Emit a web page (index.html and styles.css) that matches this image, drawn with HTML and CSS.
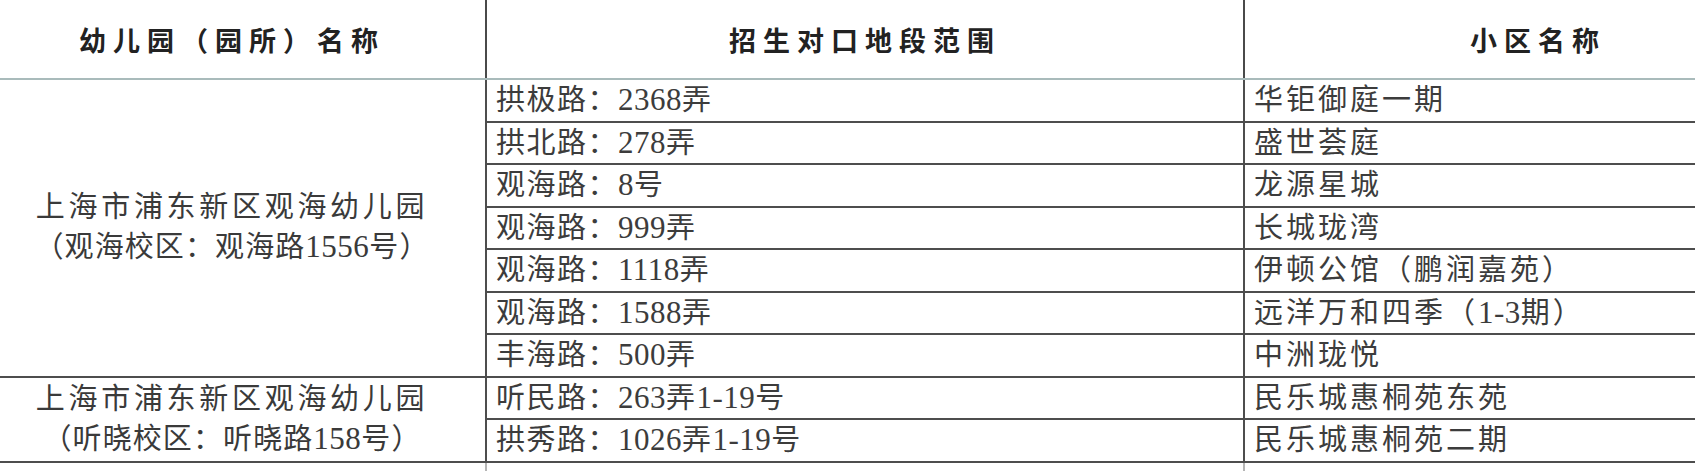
FILE: index.html
```html
<!DOCTYPE html>
<html lang="zh-CN">
<head>
<meta charset="utf-8">
<title>招生对口地段</title>
<link rel="stylesheet" href="styles.css">
</head>
<body>
<div class="page">
<table class="sheet">
<colgroup><col class="c1"><col class="c2"><col class="c3"></colgroup>
<thead>
<tr>
<th class="hd">幼儿园（园所）名称</th>
<th class="hd">招生对口地段范围</th>
<th class="hd">小区名称</th>
</tr>
</thead>
<tbody>
<tr>
<td class="school" rowspan="7"><div class="l1">上海市浦东新区观海幼儿园</div><div class="l2">（观海校区：观海路<span class="num">1556</span>号）</div></td>
<td class="road">拱极路：<span class="num">2368</span>弄</td>
<td class="estate">华钜御庭一期</td>
</tr>
<tr><td class="road">拱北路：<span class="num">278</span>弄</td><td class="estate">盛世荟庭</td></tr>
<tr><td class="road">观海路：<span class="num">8</span>号</td><td class="estate">龙源星城</td></tr>
<tr><td class="road">观海路：<span class="num">999</span>弄</td><td class="estate">长城珑湾</td></tr>
<tr><td class="road">观海路：<span class="num">1118</span>弄</td><td class="estate">伊顿公馆（鹏润嘉苑）</td></tr>
<tr><td class="road">观海路：<span class="num">1588</span>弄</td><td class="estate">远洋万和四季（<span class="num">1-3</span>期）</td></tr>
<tr><td class="road">丰海路：<span class="num">500</span>弄</td><td class="estate">中洲珑悦</td></tr>
<tr>
<td class="school" rowspan="2"><div class="l1">上海市浦东新区观海幼儿园</div><div class="l2">（听晓校区：听晓路<span class="num">158</span>号）</div></td>
<td class="road">听民路：<span class="num">263</span>弄<span class="num">1-19</span>号</td>
<td class="estate">民乐城惠桐苑东苑</td>
</tr>
<tr><td class="road">拱秀路：<span class="num">1026</span>弄<span class="num">1-19</span>号</td><td class="estate">民乐城惠桐苑二期</td></tr>
<tr class="tail"><td></td><td></td><td></td></tr>
</tbody>
</table>
</div>
</body>
</html>
```

FILE: styles.css
```css
html, body {
  margin: 0;
  padding: 0;
  background: #ffffff;
}

.page {
  width: 1695px;
  height: 471px;
  overflow: hidden;
  background: #ffffff;
}

.sheet {
  border-collapse: collapse;
  table-layout: fixed;
  width: 1854px;
  margin-left: -23px;
  font-family: "Liberation Serif", "Noto Sans CJK SC", serif;
  color: #3c3c3c;
}

.c1 { width: 508px; }
.c2 { width: 758px; }
.c3 { width: 588px; }

.hd {
  height: 78px;
  padding: 0;
  font-size: 27px;
  font-weight: bold;
  letter-spacing: 7px;
  color: #222222;
  text-align: center;
  vertical-align: middle;
  border-left: 2px solid #4a4a4a;
  border-right: 2px solid #4a4a4a;
  border-bottom: 2px solid #a9bbbb;
}

td {
  padding: 0;
  border: 2px solid #4d4d4d;
}

.road,
.estate {
  height: 40.5px;
  padding-left: 9px;
  font-size: 29px;
  line-height: 34px;
  text-align: left;
  vertical-align: middle;
  white-space: nowrap;
}

.road {
  letter-spacing: 1.5px;
}

.estate {
  letter-spacing: 3px;
}

.num {
  font-size: 31px;
  letter-spacing: 0.5px;
}

.school {
  text-align: center;
  vertical-align: middle;
  font-size: 29px;
  line-height: 39px;
  color: #3a3a3a;
  white-space: nowrap;
}

.school .l1 {
  letter-spacing: 3.7px;
}

.school .l2 {
  letter-spacing: 1.1px;
}

.tail td {
  height: 8px;
  border-bottom: none;
  border-left-color: #b5b5b5;
  border-right-color: #b5b5b5;
}
```
